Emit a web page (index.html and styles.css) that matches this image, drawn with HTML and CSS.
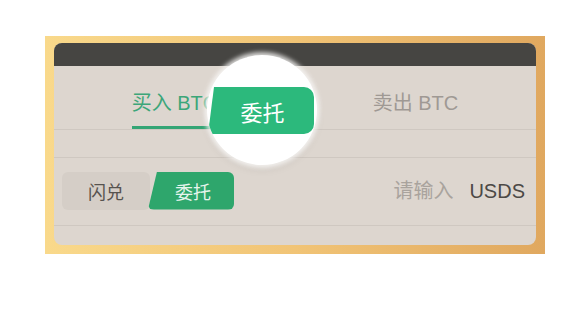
FILE: index.html
```html
<!DOCTYPE html>
<html lang="zh-CN">
<head>
<meta charset="utf-8">
<title>委托</title>
<link rel="stylesheet" href="styles.css">
</head>
<body>
<div class="frame">
  <div class="panel">
    <div class="topbar"></div>
    <div class="tabs">
      <div class="tab"><span class="tab-label active">买入 BTC</span></div>
      <div class="tab"><span class="tab-label">卖出 BTC</span></div>
    </div>
    <div class="spacer"></div>
    <div class="row">
      <div class="seg">
        <span class="seg-btn">闪兑</span>
        <span class="seg-btn selected">委托</span>
      </div>
      <div class="amount">
        <span class="placeholder">请输入</span>
        <span class="unit">USDS</span>
      </div>
    </div>
    <div class="bottom"></div>
    <div class="magnifier">
      <div class="mag-btn">委托</div>
    </div>
  </div>
</div>
</body>
</html>
```

FILE: styles.css
```css
html, body {
  margin: 0;
  padding: 0;
  background: #ffffff;
  font-family: "Liberation Sans", "Noto Sans CJK SC", sans-serif;
}

.frame {
  margin: 36px 0 0 45px;
  width: 500px;
  height: 218px;
  box-sizing: border-box;
  padding: 7px 9px 9px 9px;
  background: linear-gradient(90deg, #f9d98b 0%, #f1c476 50%, #e0a85f 100%);
}

.panel {
  position: relative;
  width: 482px;
  height: 202px;
  border-radius: 8px;
  overflow: hidden;
  background: #ddd6cf;
  display: flex;
  flex-direction: column;
}

.topbar {
  height: 23px;
  background: #464542;
  flex: none;
}

.tabs {
  display: flex;
  height: 63px;
  border-bottom: 1px solid #cfc8c1;
  flex: none;
}

.tab {
  flex: 1;
  display: flex;
  justify-content: center;
  align-items: flex-end;
}

.tab-label {
  font-size: 20px;
  line-height: 24px;
  padding-bottom: 11px;
  border-bottom: 3px solid transparent;
  color: #9f9994;
  white-space: nowrap;
}

.tab-label.active {
  color: #3ca679;
  border-bottom-color: #34a575;
}

.spacer {
  height: 27px;
  border-bottom: 1px solid #cfc8c1;
  flex: none;
}

.row {
  height: 68px;
  box-sizing: border-box;
  padding: 14px 11px 16px 8px;
  display: flex;
  align-items: center;
  border-bottom: 1px solid #cfc8c1;
  flex: none;
}

.seg {
  display: flex;
  height: 38px;
}

.seg-btn {
  width: 88px;
  height: 38px;
  display: flex;
  align-items: center;
  justify-content: center;
  font-size: 18px;
  color: #57534f;
  background: #d5cec7;
  border-radius: 6px;
}

.seg-btn.selected {
  width: 86px;
  margin-left: -2px;
  color: #e6f4ec;
  background: #2ea66c;
  clip-path: polygon(9px 0, 100% 0, 100% 100%, 0 100%);
  padding-left: 4px;
  box-sizing: border-box;
}

.amount {
  margin-left: auto;
  display: flex;
  align-items: center;
  font-size: 20px;
  line-height: 24px;
}

.placeholder {
  color: #a9a39d;
  margin-right: 16px;
}

.unit {
  color: #4c4946;
}

.bottom {
  flex: 1;
}

.magnifier {
  position: absolute;
  left: 153px;
  top: 12px;
  width: 110px;
  height: 110px;
  border-radius: 50%;
  background: #ffffff;
  box-shadow: 0 0 4px 3px rgba(250, 249, 247, 0.8), 0 4px 10px rgba(0, 0, 0, 0.08);
  overflow: hidden;
  box-sizing: border-box;
  padding: 32px 0 0 1px;
}

.mag-btn {
  width: 106px;
  height: 47px;
  display: flex;
  align-items: center;
  justify-content: center;
  padding-left: 3px;
  box-sizing: border-box;
  font-size: 22px;
  color: #ffffff;
  background: #2cb97c;
  border-radius: 3px 10px 10px 3px;
  clip-path: polygon(6px 0, 100% 0, 100% 100%, 0 100%);
}
```
